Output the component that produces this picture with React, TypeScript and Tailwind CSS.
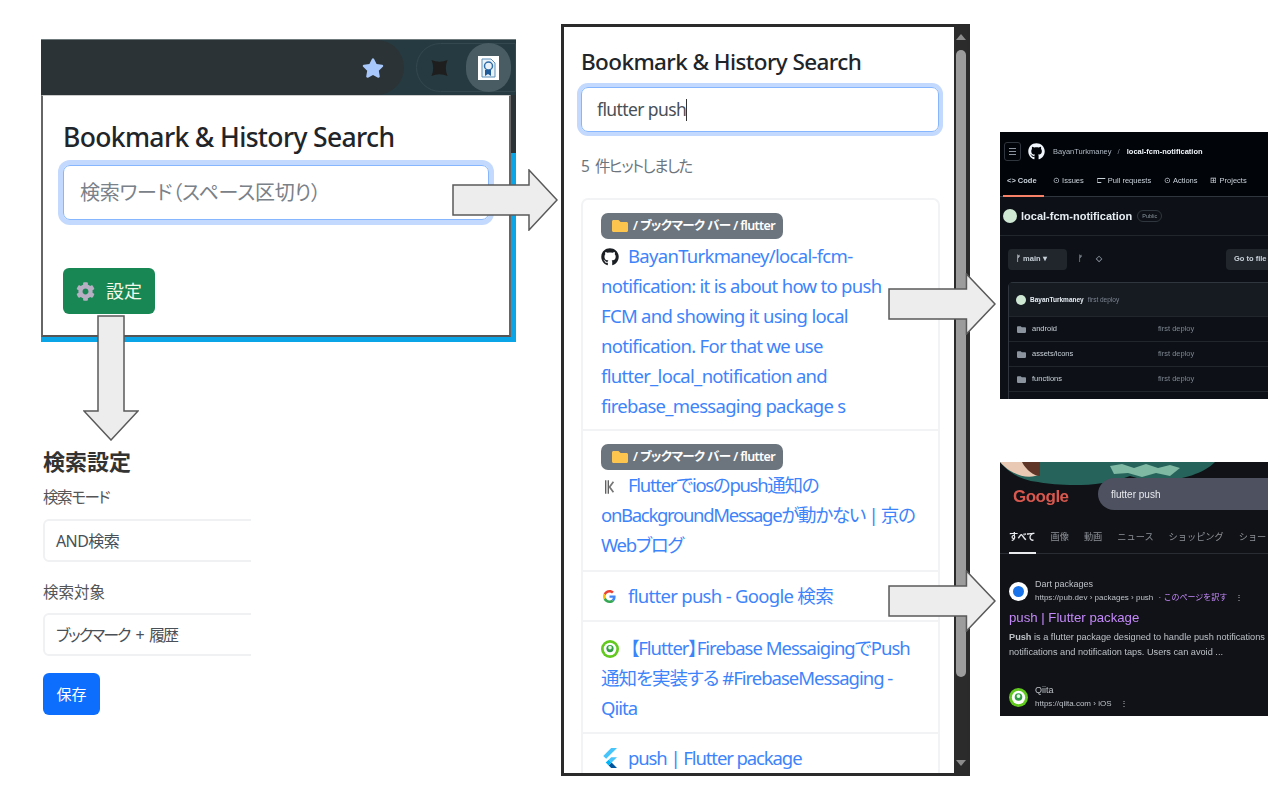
import React from "react";
import { FaGithub, FaFolder, FaStar, FaCog } from "react-icons/fa";

const JP = "font-['Noto_Sans','Noto_Sans_CJK_JP',sans-serif] [font-feature-settings:'palt']";

function Arrow({ className, down }: { className: string; down?: boolean }) {
  return (
    <svg className={`absolute ${className}`} viewBox={down ? "0 0 56 126" : "0 0 106 62"} preserveAspectRatio="none">
      <path
        d={down ? "M15 1H41V96H55L28 125L1 96H15Z" : "M1 16H77V1L105 31L77 61V46H1Z"}
        fill="#ededed"
        stroke="#5a5a5a"
        strokeWidth="1.5"
      />
    </svg>
  );
}

function GoogleG() {
  return (
    <svg viewBox="0 0 48 48" className="w-[13px] h-[13px] shrink-0">
      <path fill="#ea4335" d="M24 9.5c3.5 0 6.700 1.200 9.200 3.600l6.800-6.800C35.900 2.500 30.400 0 24 0 14.600 0 6.500 5.400 2.600 13.300l7.900 6.100C12.400 13.700 17.700 9.500 24 9.500z" />
      <path fill="#4285f4" d="M46.500 24.500c0-1.600-.1-3.100-.4-4.500H24v9h12.700c-.6 3-2.200 5.500-4.700 7.200l7.600 5.900c4.400-4.100 6.900-10.100 6.900-17.600z" />
      <path fill="#fbbc05" d="M10.500 28.600A14.500 14.500 0 0 1 10.500 19.400l-7.900-6.100A24 24 0 0 0 2.600 34.700z" />
      <path fill="#34a853" d="M24 48c6.500 0 11.900-2.100 15.900-5.900l-7.600-5.900c-2.100 1.400-4.900 2.300-8.300 2.300-6.300 0-11.600-4.200-13.500-9.900l-7.900 6.100C6.500 42.600 14.600 48 24 48z" />
    </svg>
  );
}

function FlutterLogo() {
  return (
    <svg viewBox="0 0 20 24" className="w-[17px] h-[20px] shrink-0">
      <path fill="#47c5fb" d="M12 0h7L6 13 2.500 9.500z" />
      <path fill="#47c5fb" d="M12 11h7l-6.500 6.500L9 14z" />
      <path fill="#00569e" d="M9 21l3.500-3.500L19 24h-7z" />
      <path fill="#00b5f8" d="M5.500 17.500L9 14l3.500 3.500L9 21z" />
    </svg>
  );
}

function QiitaLogo({ size = "w-[18px] h-[18px]" }: { size?: string }) {
  return (
    <svg viewBox="0 0 20 20" className={`${size} shrink-0`}>
      <circle cx="10" cy="10" r="10" fill="#62c91e" />
      <circle cx="10" cy="10" r="7" fill="#fff" />
      <circle cx="10" cy="9.500" r="4" fill="#2f9e44" />
      <circle cx="10" cy="8.500" r="2" fill="#e8f8e0" />
    </svg>
  );
}

function KyoLogo() {
  return (
    <svg viewBox="0 0 14 18" className="w-[12px] h-[16px] shrink-0 mx-[3px]">
      <path d="M2 1v16M5 1v16" stroke="#555" strokeWidth="1.500" />
      <path d="M11 3L6.500 9l4.500 6" stroke="#777" strokeWidth="2" fill="none" />
    </svg>
  );
}

function ExtensionIcon() {
  return (
    <svg viewBox="0 0 21 24" className="w-[21px] h-[24px]">
      <rect width="21" height="24" fill="#fff" />
      <path d="M4 3h9l4 4v14H4z" fill="#eaf2f8" stroke="#5b8db8" />
      <circle cx="10.500" cy="10" r="4" fill="none" stroke="#2f6da8" strokeWidth="1.500" />
      <path d="M7 14v6l3-2 3 2v-6z" fill="#1f5c99" />
    </svg>
  );
}

function PuzzleBlob() {
  return (
    <svg viewBox="0 0 20 20" className="w-[21px] h-[18px]">
      <path d="M1 1Q10 5 19 1Q15 10 19 19Q10 15 1 19Q5 10 1 1Z" fill="#1e1e1e" />
    </svg>
  );
}

function FolderBadge() {
  return (
    <span className="flex items-center w-[182px] h-[26px] rounded-[7px] bg-[#6c757d] pl-[11px] text-white text-[12.500px] font-semibold whitespace-nowrap tracking-[-0.6px]">
      <FaFolder className="text-[#fdc44e] w-[16px] h-[16px] mr-[5px] shrink-0" />/ ブックマーク バー / flutter
    </span>
  );
}

function LauncherPopup() {
  return (
    <div className="absolute left-[41px] top-[39px] w-[475px] h-[303px] bg-[#0aa5e6] overflow-hidden">
      <div className="h-[56px] bg-[#263b41] border-t border-[#6f7a7d] flex items-center">
        <div className="w-[364px] h-[55px] bg-[#2b3336] rounded-r-[28px] flex items-center justify-end pr-[20px]">
          <FaStar className="text-[#a8c7fa] w-[22px] h-[22px]" />
        </div>
        <div className="ml-[12px] w-[100px] h-[49px] rounded-l-[25px] border border-[#33494f] flex items-center pl-[12px] justify-between">
          <PuzzleBlob />
          <div className="w-[45px] h-[49px] rounded-full bg-[#4a5c63] flex items-center justify-center mr-[4px]">
            <ExtensionIcon />
          </div>
        </div>
      </div>
      <div className="relative h-[58px] -mb-[58px] bg-[#2b3336]" />
      <div className="relative w-[470px] h-[242px] bg-white border-x-2 border-b-2 border-x-[#666] border-b-[#555] border-t border-t-[#ccc] pl-[20px] pt-[23px]">
        <h1 className={`${JP} text-[26.500px] leading-[36px] font-medium text-[#212529] tracking-[-0.65px]`}>Bookmark &amp; History Search</h1>
        <div className="mt-[10px] w-[426px] h-[55px] rounded-[7px] border border-[#86b7fe] shadow-[0_0_0_5px_#c3d9fd] flex items-center pl-[16px] text-[20px] text-[#7a8188] tracking-[-0.2px]">
          <span className={JP}>検索ワード（スペース区切り）</span>
        </div>
        <button className={`${JP} mt-[48px] w-[92px] h-[46px] rounded-[6px] bg-[#198754] text-[#f2f7e8] text-[18px] flex items-center justify-center gap-[11px]`}>
          <FaCog className="text-[#b7b0c4] w-[19px] h-[19px]" />
          設定
        </button>
      </div>
    </div>
  );
}

function SettingsForm() {
  return (
    <div className={`${JP} absolute left-[43px] top-[445px] w-[208px] text-[#212529] overflow-hidden`}>
      <h2 className="text-[22px] leading-[32px] font-bold text-[#333]">検索設定</h2>
      <p className="mt-[8px] text-[15.500px] leading-[24px] text-[#555] tracking-[-1.400px]">検索モード</p>
      <div className="mt-[10px] w-[240px] h-[43px] rounded-[6px] border-2 border-[#f0f1f3] flex items-center pl-[11px] text-[16px] text-[#495057] tracking-[-0.6px]">AND検索</div>
      <p className="mt-[18px] text-[15.500px] leading-[24px] text-[#555]">検索対象</p>
      <div className="mt-[9px] w-[240px] h-[43px] rounded-[6px] border-2 border-[#f0f1f3] flex items-center pl-[11px] text-[16px] text-[#495057] tracking-[-2px] [word-spacing:4px]">ブックマーク + 履歴</div>
      <button className="mt-[17px] w-[57px] h-[42px] rounded-[6px] bg-[#0d6efd] text-white text-[15px]">保存</button>
    </div>
  );
}

function ResultRow({ className, children }: { className: string; children: React.ReactNode }) {
  return <div className={`border-b-2 border-[#f1f3f5] pl-[18px] pr-[20px] ${className}`}>{children}</div>;
}

function ResultsPopup() {
  return (
    <div className="absolute left-[561px] top-[24px] w-[409px] h-[752px] border-[3px] border-[#2a2a2a] bg-white flex overflow-hidden">
      <div className={`${JP} flex-1 min-w-0 overflow-hidden pl-[17px] pr-[17px] pt-[18px]`}>
        <h1 className="text-[22.500px] leading-[34px] font-medium text-[#212529] whitespace-nowrap tracking-[-0.6px]">Bookmark &amp; History Search</h1>
        <div className="mt-[8px] w-[358px] h-[45px] rounded-[7px] border border-[#86b7fe] shadow-[0_0_0_4px_#c3d9fd] flex items-center pl-[15px] text-[17.500px] text-[#495057] tracking-[-0.6px]">
          flutter push<span className="w-px h-[22px] bg-[#333]" />
        </div>
        <p className="mt-[22px] text-[15.500px] leading-[24px] text-[#6c757d] tracking-[-1.500px] [word-spacing:4px]">5 件ヒットしました</p>
        <div className="mt-[20px] w-[359px] rounded-t-[7px] border-x-2 border-t-2 border-[#f1f3f5] text-[18.500px] leading-[30px] text-[#3d84fb]">
          <ResultRow className="h-[231px] pt-[13px] tracking-[-0.7px]">
            <FolderBadge />
            <div className="mt-[2px]">
              <FaGithub className="inline-block text-[#1b1f23] w-[18px] h-[18px] mr-[9px] align-[-3px]" />
              BayanTurkmaney/local-fcm-notification: it is about how to push FCM and showing it using local notification. For that we use flutter_local_notification and firebase_messaging package s
            </div>
          </ResultRow>
          <ResultRow className="h-[141px] pt-[13px] tracking-[-1.300px]">
            <FolderBadge />
            <div>
              <span className="inline-flex align-[-3px] mr-[9px]"><KyoLogo /></span>
              Flutterでiosのpush通知の onBackgroundMessageが動かない | 京のWebブログ
            </div>
          </ResultRow>
          <ResultRow className="h-[50px] flex items-center gap-[11px] tracking-[-0.7px]">
            <span className="w-[16px] flex justify-center"><GoogleG /></span>
            <span>flutter push - Google 検索</span>
          </ResultRow>
          <ResultRow className="h-[112px] pt-[11px] tracking-[-1px]">
            <span className="inline-flex mr-[11px] align-[-3px]"><QiitaLogo /></span>
            【Flutter】Firebase MessaigingでPush通知を実装する #FirebaseMessaging - Qiita
          </ResultRow>
          <div className="h-[48px] pl-[18px] flex items-center gap-[10px] tracking-[-1.100px]">
            <FlutterLogo />
            <span>push | Flutter package</span>
          </div>
        </div>
      </div>
      <div className="w-[13px] bg-[#2b2b2b] flex flex-col items-center">
        <div className="mt-[7px] w-0 h-0 border-x-[5px] border-x-transparent border-b-[6px] border-b-[#8c8c8c]" />
        <div className="mt-[10px] w-[10px] h-[627px] rounded-[5px] bg-[#9c9c9c]" />
        <div className="mt-auto mb-[7px] w-0 h-0 border-x-[5px] border-x-transparent border-t-[6px] border-t-[#8c8c8c]" />
      </div>
    </div>
  );
}

function RepoRow({ name }: { name: string }) {
  return (
    <div className="h-[25px] border-t border-[#21262d] flex items-center pl-[8px] text-[7.500px] text-[#c9d1d9]">
      <FaFolder className="w-[9px] h-[9px] text-[#8b949e]" />
      <span className="ml-[6px] w-[126px]">{name}</span>
      <span className="text-[#7d8590]">first deploy</span>
    </div>
  );
}

function GithubShot() {
  return (
    <div className="absolute left-[1000px] top-[132px] w-[268px] h-[267px] bg-[#0d1117] overflow-hidden font-['Liberation_Sans',sans-serif] blur-[0.7px]">
      <div className="h-[65px] bg-[#010409] border-b border-[#30363d]">
        <div className="flex items-center h-[39px] pl-[4px]">
          <div className="w-[17px] h-[19px] rounded-[3px] border border-[#30363d] flex flex-col gap-[2px] items-center justify-center">
            <span className="w-[7px] h-px bg-[#8b949e]" />
            <span className="w-[7px] h-px bg-[#8b949e]" />
            <span className="w-[7px] h-px bg-[#8b949e]" />
          </div>
          <FaGithub className="ml-[7px] text-[#f0f6fc] w-[17px] h-[17px]" />
          <span className="ml-[8px] text-[7.500px] text-[#b1bac4]">BayanTurkmaney</span>
          <span className="ml-[6px] text-[8px] text-[#7d8590]">/</span>
          <span className="ml-[7px] text-[7.500px] font-bold text-[#f0f6fc]">local-fcm-notification</span>
        </div>
        <div className="flex items-start h-[26px] pl-[3px] pt-[3px] text-[7.500px] text-[#c9d1d9] whitespace-nowrap">
          <div className="w-[41px] h-[23px] border-b-2 border-[#f78166] pl-[4px] pt-[1px] font-bold">&lt;&gt; Code</div>
          <span className="ml-[9px] pt-[1px]">⊙ Issues</span>
          <span className="ml-[13px] pt-[1px]">⫍ Pull requests</span>
          <span className="ml-[13px] pt-[1px]">⊙ Actions</span>
          <span className="ml-[13px] pt-[1px]">⊞ Projects</span>
        </div>
      </div>
      <div className="h-[39px] border-b border-[#21262d] flex items-center pl-[3px]">
        <span className="w-[14px] h-[14px] rounded-full bg-[#cfe8d4]" />
        <span className="ml-[4px] text-[11px] font-bold text-[#e6edf3]">local-fcm-notification</span>
        <span className="ml-[5px] px-[4px] rounded-full border border-[#30363d] text-[5.500px] leading-[10px] text-[#8b949e]">Public</span>
      </div>
      <div className="flex items-center h-[46px] pl-[8px] text-[7.500px] font-bold text-[#c9d1d9]">
        <div className="w-[59px] h-[21px] rounded-[4px] bg-[#21262d] flex items-center pl-[8px]">ᚠ main ▾</div>
        <span className="ml-[11px] text-[#8b949e]">ᚠ</span>
        <span className="ml-[13px] text-[#8b949e]">◇</span>
        <div className="ml-auto w-[42px] h-[21px] rounded-l-[4px] bg-[#21262d] flex items-center pl-[8px] whitespace-nowrap">Go to file</div>
      </div>
      <div className="ml-[8px] rounded-tl-[5px] border-l border-t border-[#30363d]">
        <div className="h-[33px] bg-[#161b22] flex items-center pl-[7px] text-[6.500px]">
          <span className="w-[10px] h-[10px] rounded-full bg-[#cfe8d4]" />
          <span className="ml-[4px] font-bold text-[#e6edf3]">BayanTurkmaney</span>
          <span className="ml-[4px] text-[#7d8590]">first deploy</span>
        </div>
        <RepoRow name="android" />
        <RepoRow name="assets/icons" />
        <RepoRow name="functions" />
        <div className="h-[10px] border-t border-[#21262d]" />
      </div>
    </div>
  );
}

function GoogleShot() {
  return (
    <div className="absolute left-[1000px] top-[462px] w-[268px] h-[254px] bg-[#101218] overflow-hidden font-['Liberation_Sans','Noto_Sans_CJK_JP',sans-serif] blur-[0.7px]">
      <div className="h-[48px] relative">
        <svg viewBox="0 0 268 48" className="absolute left-0 top-0 w-[268px] h-[48px]">
          <path d="M0 0H215C200 16 160 24 130 14C100 26 60 24 38 20C20 18 8 10 0 0Z" fill="#26635a" />
          <path d="M0 0H40V12C30 18 12 14 0 0Z" fill="#e9c9b4" />
          <path d="M22 0H40V14C34 14 26 8 22 0Z" fill="#5e3527" />
          <path d="M110 4l12 -2 12 4 12 -4 12 4 12 -3 10 3 -10 8 -14 -3 -14 4 -14 -4 -14 1z" fill="#7fb8a3" />
        </svg>
      </div>
      <div className="absolute left-[13px] top-[22px] text-[17px] font-bold text-[#d9584e] tracking-[-0.5px]">Google</div>
      <div className="absolute left-[98px] top-[16px] w-[190px] h-[32px] rounded-l-[16px] bg-[#4d5160] flex items-center pl-[13px] text-[10px] text-[#e8eaed]">flutter push</div>
      <div className="mt-[17px] h-[27px] border-b border-[#2a2c33] pl-[9px] flex gap-[15px] text-[9.200px] text-[#8d9096] whitespace-nowrap">
        <span className="h-[27px] pt-[4px] border-b-2 border-[#e8eaed] text-[#e8eaed] font-bold">すべて</span>
        <span className="pt-[4px]">画像</span>
        <span className="pt-[4px]">動画</span>
        <span className="pt-[4px]">ニュース</span>
        <span className="pt-[4px]">ショッピング</span>
        <span className="pt-[4px]">ショー</span>
      </div>
      <div className="mt-[24px] pl-[9px] flex items-center">
        <span className="w-[19px] h-[19px] rounded-full bg-white flex items-center justify-center">
          <span className="w-[11px] h-[11px] rounded-full bg-[#1a73e8]" />
        </span>
        <div className="ml-[7px] text-[#bdc1c6]">
          <div className="text-[9px] leading-[13px]">Dart packages</div>
          <div className="text-[8px] leading-[13px] whitespace-nowrap">
            https://pub.dev › packages › push <span className="ml-[3px] text-[#c58af9] text-[8px]">· このページを訳す</span>
            <span className="ml-[8px]">⋮</span>
          </div>
        </div>
      </div>
      <div className="pl-[9px] mt-[4px] text-[13.200px] leading-[20px] text-[#c58af9] whitespace-nowrap">push | Flutter package</div>
      <div className="pl-[9px] mt-[2px] text-[9.200px] leading-[15px] text-[#bdc1c6] whitespace-nowrap">
        <div><b>Push</b> is a flutter package designed to handle push notifications</div>
        <div>notifications and notification taps. Users can avoid ...</div>
      </div>
      <div className="mt-[24px] pl-[9px] flex items-center">
        <QiitaLogo size="w-[19px] h-[19px]" />
        <div className="ml-[7px] text-[#bdc1c6]">
          <div className="text-[9px] leading-[13px]">Qiita</div>
          <div className="text-[8px] leading-[13px] whitespace-nowrap">https://qiita.com › iOS <span className="ml-[6px]">⋮</span></div>
        </div>
      </div>
    </div>
  );
}

export default function App() {
  return (
    <div className="relative w-[1280px] h-[800px] bg-white overflow-hidden">
      <LauncherPopup />
      <SettingsForm />
      <ResultsPopup />
      <GithubShot />
      <GoogleShot />
      <Arrow className="left-[452px] top-[169px] w-[106px] h-[62px]" />
      <Arrow className="left-[888px] top-[273px] w-[108px] h-[62px]" />
      <Arrow className="left-[888px] top-[570px] w-[108px] h-[62px]" />
      <Arrow down className="left-[83px] top-[315px] w-[56px] h-[126px]" />
    </div>
  );
}
